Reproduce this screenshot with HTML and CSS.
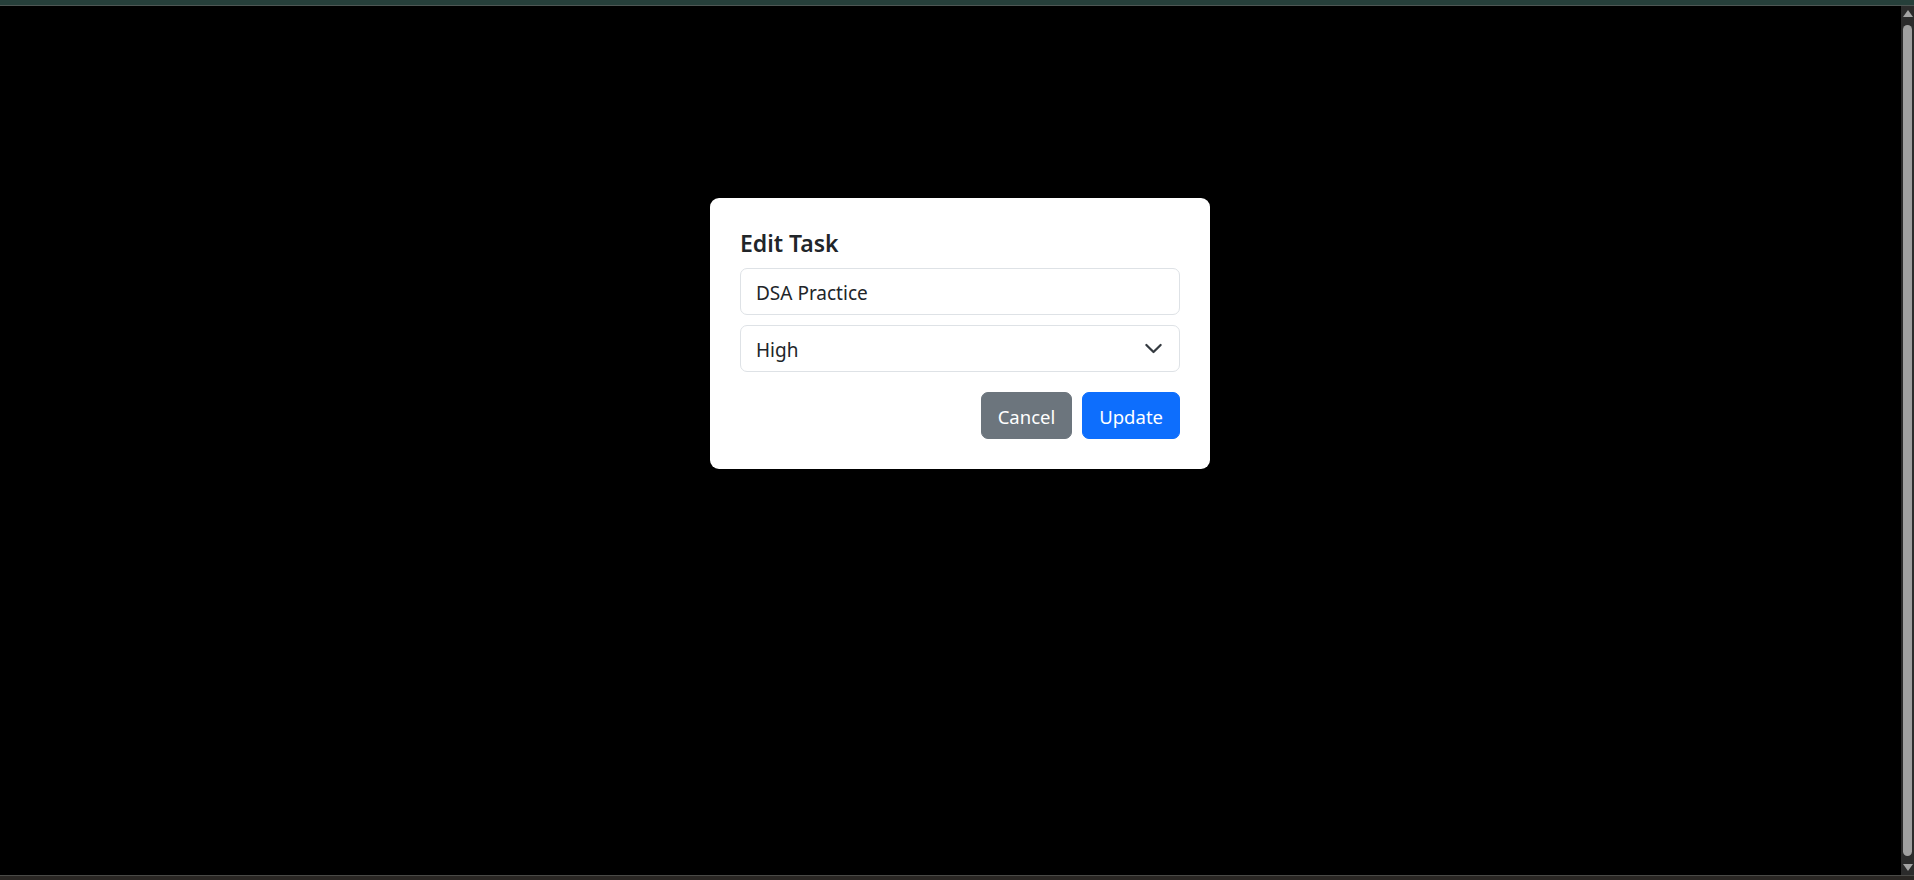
FILE: index.html
```html
<!DOCTYPE html>
<html lang="en">
<head>
<meta charset="utf-8">
<title>Edit Task</title>
<link rel="stylesheet" href="styles.css">
</head>
<body>
<div class="topbar"></div>
<div class="main">
  <div class="backdrop">
    <div class="modal">
      <h5 class="modal-title">Edit Task</h5>
      <input class="form-control" type="text" value="DSA Practice">
      <div class="select-wrap">
        <select class="form-select">
          <option>High</option>
          <option>Medium</option>
          <option>Low</option>
        </select>
        <svg class="chevron" viewBox="0 0 16 16" width="19" height="19"><path d="m2 5 6 6 6-6" fill="none" stroke="#343a40" stroke-width="1.9" stroke-linecap="round" stroke-linejoin="round"/></svg>
      </div>
      <div class="actions">
        <button class="btn btn-secondary">Cancel</button>
        <button class="btn btn-primary">Update</button>
      </div>
    </div>
  </div>
  <div class="scrollbar">
    <div class="sb-arrow up"></div>
    <div class="sb-track"><div class="sb-thumb"></div></div>
    <div class="sb-arrow down"></div>
  </div>
</div>
<div class="bottombar"></div>
</body>
</html>
```
FILE: styles.css
```css
* { box-sizing: border-box; }
html, body { margin: 0; padding: 0; height: 100%; }
body {
  display: flex;
  flex-direction: column;
  background: #000;
  font-family: "Noto Sans", "Open Sans", sans-serif;
  color: #212529;
  overflow: hidden;
}
.topbar {
  height: 6px;
  flex: none;
  background: #263f3a;
  border-bottom: 1px solid #4d5653;
}
.main {
  flex: 1;
  display: flex;
  min-height: 0;
}
.backdrop {
  flex: 1;
  background: #000;
  display: flex;
  justify-content: center;
  align-items: flex-start;
  padding-top: 192px;
  padding-left: 19px;
}
.modal {
  width: 500px;
  background: #fff;
  border-radius: 9px;
  padding: 30px;
  display: flex;
  flex-direction: column;
}
.modal-title {
  margin: 0 0 10px 0;
  font-size: 23px;
  line-height: 30px;
  font-weight: 600;
  color: #212529;
}
.form-control, .form-select {
  display: block;
  width: 100%;
  height: 47px;
  padding: 8px 15px 6px;
  font-family: inherit;
  font-size: 19px;
  color: #212529;
  background: #fff;
  border: 1px solid #dee2e6;
  border-radius: 7px;
  outline: none;
  appearance: none;
  -webkit-appearance: none;
}
.select-wrap {
  position: relative;
  margin-top: 10px;
}
.form-select { padding-right: 50px; }
.chevron {
  position: absolute;
  right: 17px;
  top: 14px;
  pointer-events: none;
}
.actions {
  display: flex;
  justify-content: flex-end;
  gap: 10px;
  margin-top: 20px;
}
.btn {
  height: 47px;
  padding: 1px 16px 0;
  font-family: inherit;
  font-size: 18.5px;
  border: 1px solid transparent;
  border-radius: 7px;
  color: #fff;
  cursor: pointer;
}
.btn-secondary { background: #6c757d; border-color: #6c757d; }
.btn-primary { background: #0d6efd; border-color: #0d6efd; }
.scrollbar {
  width: 13px;
  flex: none;
  background: #2b2b2b;
  display: flex;
  flex-direction: column;
  align-items: center;
  padding: 4px 0;
}
.sb-arrow {
  width: 0;
  height: 0;
  border-left: 5px solid transparent;
  border-right: 5px solid transparent;
  flex: none;
}
.sb-arrow.up { border-bottom: 7px solid #a3a3a3; }
.sb-arrow.down { border-top: 7px solid #a3a3a3; }
.sb-track {
  flex: 1;
  width: 100%;
  display: flex;
  justify-content: center;
  padding: 8px 0;
}
.sb-thumb {
  width: 9px;
  height: 100%;
  background: #9f9f9f;
  border-radius: 5px;
}
.bottombar {
  height: 5px;
  flex: none;
  background: #2a2724;
  border-top: 1px solid #4a4a47;
}
```
